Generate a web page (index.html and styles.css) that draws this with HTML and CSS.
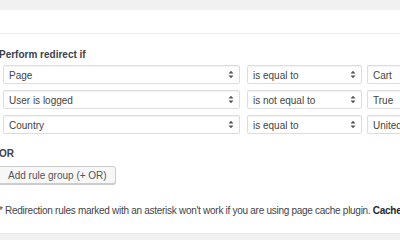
FILE: index.html
```html
<!DOCTYPE html>
<html lang="en">
<head>
    <meta charset="UTF-8">
    <title>Redirect rules</title>
    <link rel="stylesheet" href="styles.css">
</head>
<body>
    <div class="topbar"></div>
    <div class="box">
        <div class="boxhead"></div>
        <div class="inside">
            <p class="label">Perform redirect if</p>

            <div class="rules">
                <div class="rule">
                    <div class="sel field">Page
                        <svg class="arrows" width="6" height="9" viewBox="0 0 6 9"><path d="M0.5 3.5 3 0.8 5.5 3.5z M0.5 5.5 3 8.2 5.5 5.5z" fill="#555"/></svg>
                    </div>
                    <div class="sel op">is equal to
                        <svg class="arrows" width="6" height="9" viewBox="0 0 6 9"><path d="M0.5 3.5 3 0.8 5.5 3.5z M0.5 5.5 3 8.2 5.5 5.5z" fill="#555"/></svg>
                    </div>
                    <div class="sel val">Cart</div>
                </div>
                <div class="rule">
                    <div class="sel field">User is logged
                        <svg class="arrows" width="6" height="9" viewBox="0 0 6 9"><path d="M0.5 3.5 3 0.8 5.5 3.5z M0.5 5.5 3 8.2 5.5 5.5z" fill="#555"/></svg>
                    </div>
                    <div class="sel op">is not equal to
                        <svg class="arrows" width="6" height="9" viewBox="0 0 6 9"><path d="M0.5 3.5 3 0.8 5.5 3.5z M0.5 5.5 3 8.2 5.5 5.5z" fill="#555"/></svg>
                    </div>
                    <div class="sel val">True</div>
                </div>
                <div class="rule">
                    <div class="sel field">Country
                        <svg class="arrows" width="6" height="9" viewBox="0 0 6 9"><path d="M0.5 3.5 3 0.8 5.5 3.5z M0.5 5.5 3 8.2 5.5 5.5z" fill="#555"/></svg>
                    </div>
                    <div class="sel op">is equal to
                        <svg class="arrows" width="6" height="9" viewBox="0 0 6 9"><path d="M0.5 3.5 3 0.8 5.5 3.5z M0.5 5.5 3 8.2 5.5 5.5z" fill="#555"/></svg>
                    </div>
                    <div class="sel val">United Kingdom</div>
                </div>
            </div>

            <p class="or">OR</p>
            <button class="addgroup">Add rule group (+ OR)</button>

            <p class="note">* Redirection rules marked with an asterisk won't work if you are using page cache plugin. <b>Cache</b></p>
        </div>
    </div>
    <div class="bottombar"></div>
</body>
</html>
```

FILE: styles.css
```css
body{
    margin: 0;
    width: 400px;
    height: 240px;
    overflow: hidden;
    background-color: #fff;
    font-family: "Liberation Sans", Arial, sans-serif;
    font-size: 10px;
    color: #444;
}
.topbar{
    height: 10px;
    background-color: #f1f1f1;
}
.box{
    height: 223px;
    background-color: #fff;
}
.boxhead{
    height: 23px;
    border-bottom: 1px solid #eee;
}
.inside{
    padding-left: 0;
    padding-top: 15px;
}
.label{
    margin: 0;
    margin-left: -1px;
    font-weight: bold;
    color: #3c4146;
    line-height: 12px;
    height: 12px;
}
.rules{
    display: flex;
    flex-direction: column;
    gap: 6px;
    margin-top: 4px;
    margin-left: 3px;
}
.rule{
    display: flex;
    gap: 7px;
}
.sel{
    position: relative;
    height: 19px;
    line-height: 19px;
    box-sizing: border-box;
    border: 1px solid #ddd;
    border-radius: 2px;
    box-shadow: inset 0 1px 1px rgba(0,0,0,0.05);
    padding-left: 5px;
    background-color: #fff;
    white-space: nowrap;
    overflow: hidden;
    color: #444;
}
.field{
    width: 237px;
    flex: none;
}
.op{
    width: 115px;
    flex: none;
}
.val{
    width: 33px;
    flex: none;
    margin-left: -2px;
    border-right: none;
    border-radius: 2px 0 0 2px;
}
.arrows{
    position: absolute;
    right: 5px;
    top: 4px;
}
.or{
    margin: 0;
    margin-top: 14px;
    margin-left: -1px;
    font-weight: bold;
    color: #3c4146;
    line-height: 12px;
}
.addgroup{
    display: block;
    margin-top: 6px;
    margin-left: -3px;
    height: 18px;
    padding: 0 8px 0 10px;
    font-family: "Liberation Sans", Arial, sans-serif;
    font-size: 10px;
    color: #555;
    background-color: #f7f7f7;
    border: 1px solid #ccc;
    border-radius: 3px;
    box-shadow: 0 1px 0 #ccc;
}
.note{
    margin: 0;
    margin-top: 21px;
    margin-left: -1px;
    white-space: nowrap;
    line-height: 12px;
    letter-spacing: -0.28px;
    color: #444;
}
.note b{
    color: #23282d;
}
.bottombar{
    height: 7px;
    background-color: #f1f1f1;
    border-top: 1px solid #e8e8e8;
}
```
